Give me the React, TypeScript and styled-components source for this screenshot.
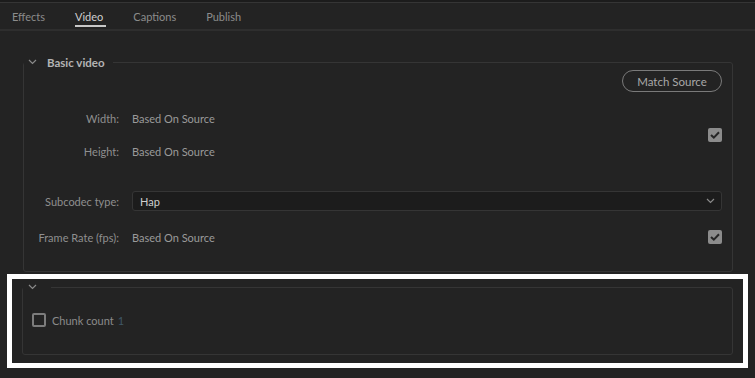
import React from "react";
import styled, { createGlobalStyle } from "styled-components";

const GlobalStyle = createGlobalStyle`
  html, body {
    margin: 0;
    padding: 0;
    background: #232323;
  }
  body {
    font-family: Lato, "Open Sans", sans-serif;
    font-size: 11px;
    color: #8f8f8f;
    -webkit-font-smoothing: antialiased;
  }
`;

const Page = styled.div`
  width: 755px;
  height: 378px;
  background: #232323;
  overflow: hidden;
  border-top: 2px solid #1c1c1c;
  box-sizing: border-box;
`;

const TabBar = styled.div`
  display: flex;
  height: 26px;
  padding-left: 12px;
  border-top: 1px solid #353535;
  border-bottom: 2px solid #2e2e2e;
`;

const Tab = styled.div<{ $active?: boolean }>`
  position: relative;
  display: flex;
  align-items: center;
  margin-right: 30px;
  color: ${(p) => (p.$active ? "#cfcfcf" : "#8c8c8c")};
  font-size: 11px;
  &::after {
    content: "";
    display: ${(p) => (p.$active ? "block" : "none")};
    position: absolute;
    left: 0;
    right: -3px;
    bottom: 2px;
    height: 2px;
    background: #c8c8c8;
  }
`;

const Content = styled.div`
  padding: 23px 22px 0 23px;
`;

const Panel = styled.fieldset`
  margin: 0;
  padding: 0 10px 0 0;
  min-inline-size: 0;
  border: 1px solid #353535;
  border-radius: 3px;
`;

const Legend = styled.legend`
  display: flex;
  align-items: center;
  gap: 10px;
  padding: 0 8px 0 4px;
  margin-left: 0;
  height: 16px;
  color: #b4b4b4;
  font-weight: 700;
  font-size: 11.5px;
`;

const ChevronIcon = styled.svg`
  width: 9px;
  height: 6px;
  display: block;
`;

const Chevron = () => (
  <ChevronIcon viewBox="0 0 9 6">
    <path d="M1 1 L4.5 4.5 L8 1" fill="none" stroke="#8a8a8a" strokeWidth="1.2" />
  </ChevronIcon>
);

const TopRow = styled.div`
  display: flex;
  justify-content: flex-end;
`;

const PillButton = styled.button`
  height: 22px;
  width: 100px;
  padding: 0;
  border: 1px solid #7a7a7a;
  border-radius: 11px;
  background: transparent;
  color: #a8a8a8;
  font-family: Lato, sans-serif;
  font-size: 11.5px;
`;

const Grid = styled.div<{ $rowHeight: number; $top: number }>`
  display: grid;
  grid-template-columns: 95px 1fr 14px;
  grid-auto-rows: ${(p) => p.$rowHeight}px;
  column-gap: 13px;
  align-items: center;
  margin-top: ${(p) => p.$top}px;
`;

const Label = styled.div`
  text-align: right;
  color: #8f8f8f;
  white-space: nowrap;
`;

const Value = styled.div`
  color: #9a9a9a;
`;

const CheckCell = styled.div<{ $span?: number }>`
  grid-column: 3;
  grid-row: ${(p) => (p.$span ? `1 / span ${p.$span}` : "auto")};
  display: flex;
  align-items: center;
  justify-content: center;
`;

const CheckedBox = styled.div`
  width: 14px;
  height: 14px;
  border-radius: 2px;
  background: #8c8c8c;
  display: flex;
  align-items: center;
  justify-content: center;
`;

const Select = styled.div`
  grid-column: 2 / span 2;
  height: 20px;
  box-sizing: border-box;
  border: 1px solid #353535;
  border-radius: 3px;
  background: #1c1c1c;
  display: flex;
  align-items: center;
  justify-content: space-between;
  padding: 0 6px 0 7px;
  color: #cfcfcf;
`;

const Spacer = styled.div<{ $h: number }>`
  height: ${(p) => p.$h}px;
`;

const Highlight = styled.div`
  margin: 2px 7px 0 7px;
  border: 5px solid #ffffff;
  height: 94px;
  box-sizing: border-box;
  padding: 0 10px;
`;

const SmallPanel = styled(Panel)`
  height: 76px;
  box-sizing: border-box;
  padding: 0;
`;

const SmallLegend = styled(Legend)`
  padding: 0 14px 0 5px;
`;

const CheckRow = styled.label`
  display: flex;
  align-items: center;
  gap: 6px;
  margin: 18px 0 0 9px;
  color: #8b8b8b;
`;

const EmptyBox = styled.div`
  width: 14px;
  height: 14px;
  box-sizing: border-box;
  border: 2px solid #7c7c7c;
  border-radius: 2px;
`;

const Dim = styled.span`
  color: #3f5766;
  margin-left: 4px;
`;

const Check = () => (
  <svg width="10" height="8" viewBox="0 0 10 8">
    <path d="M1 4 L3.8 6.6 L9 1.2" fill="none" stroke="#262626" strokeWidth="2" />
  </svg>
);

export default function App() {
  return (
    <Page>
      <GlobalStyle />
      <TabBar>
        <Tab>Effects</Tab>
        <Tab $active>Video</Tab>
        <Tab>Captions</Tab>
        <Tab>Publish</Tab>
      </TabBar>
      <Content>
        <Panel>
          <Legend>
            <Chevron />
            Basic video
          </Legend>
          <TopRow>
            <PillButton>Match Source</PillButton>
          </TopRow>
          <Grid $rowHeight={33} $top={10}>
            <Label>Width:</Label>
            <Value>Based On Source</Value>
            <CheckCell $span={2}>
              <CheckedBox>
                <Check />
              </CheckedBox>
            </CheckCell>
            <Label>Height:</Label>
            <Value>Based On Source</Value>
          </Grid>
          <Grid $rowHeight={20} $top={23}>
            <Label>Subcodec type:</Label>
            <Select>
              Hap
              <Chevron />
            </Select>
          </Grid>
          <Grid $rowHeight={20} $top={16}>
            <Label>Frame Rate (fps):</Label>
            <Value>Based On Source</Value>
            <CheckCell>
              <CheckedBox>
                <Check />
              </CheckedBox>
            </CheckCell>
          </Grid>
          <Spacer $h={24} />
        </Panel>
      </Content>
      <Highlight>
        <SmallPanel>
          <SmallLegend>
            <Chevron />
          </SmallLegend>
          <CheckRow>
            <EmptyBox />
            <span>
              Chunk count<Dim>1</Dim>
            </span>
          </CheckRow>
        </SmallPanel>
      </Highlight>
    </Page>
  );
}
